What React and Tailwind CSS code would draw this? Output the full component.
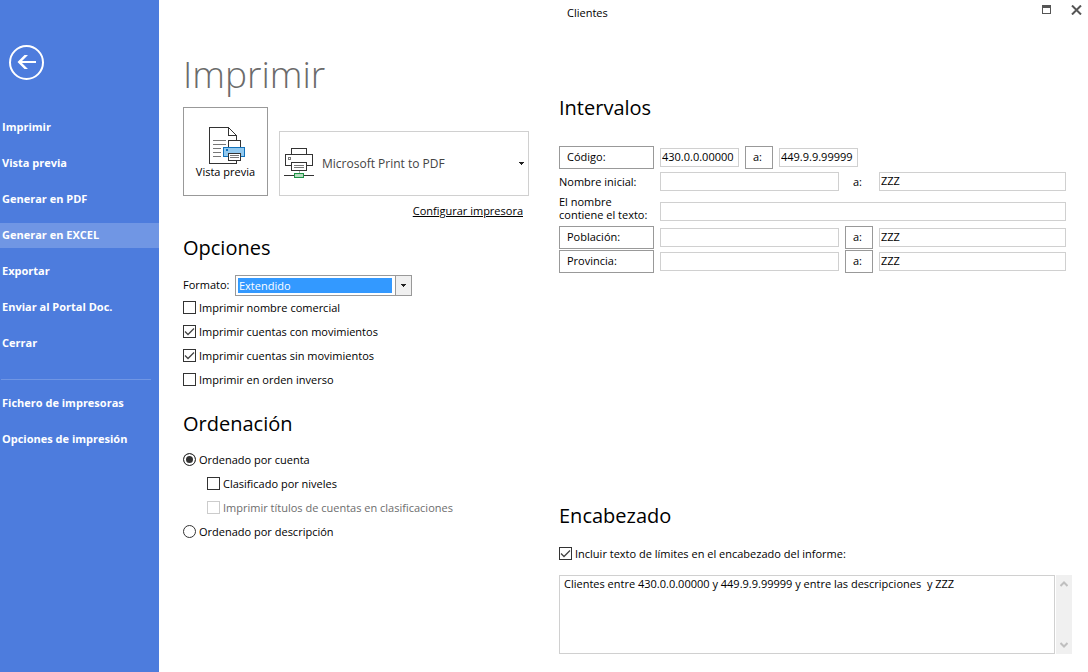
import { useState } from 'react';

const mainActions = [
  'Imprimir', 'Vista previa', 'Generar en PDF', 'Generar en EXCEL',
  'Exportar', 'Enviar al Portal Doc.', 'Cerrar'
];
const setupActions = ['Fichero de impresoras', 'Opciones de impresión'];

function NavItem({ label, active }) {
  return (
    <button type="button"
      className={`h-[25px] w-full pl-[2px] text-left font-bold text-white hover:bg-[#7096e4] ${active ? 'bg-[#7096e4]' : ''}`}>
      {label}
    </button>
  );
}

function Sidebar() {
  return (
    <nav className="w-[159px] shrink-0 bg-[#4d7cdd] pt-[45px]">
      <button type="button" aria-label="Volver" className="ml-[9px] block">
        <svg width="35" height="35" viewBox="0 0 35 35" fill="none" stroke="#fff">
          <circle cx="17.5" cy="17.5" r="16.5" strokeWidth="2" />
          <path d="M11 17h16" strokeWidth="2" />
          <path d="M19 10h-3.500l-7 7l7 7h3.500l-7 -7z" fill="#fff" stroke="none" />
        </svg>
      </button>
      <div className="mt-[35px] flex flex-col gap-[11px]">
        {mainActions.map((label) => (
          <NavItem key={label} label={label} active={label === 'Generar en EXCEL'} />
        ))}
      </div>
      <hr className="mt-[23px] mr-2 mb-[11px] ml-px border-[#7096e4]" />
      <div className="flex flex-col gap-[11px]">
        {setupActions.map((label) => <NavItem key={label} label={label} />)}
      </div>
    </nav>
  );
}

function Check({ label, defaultChecked, disabled }) {
  return (
    <label className={`flex h-6 items-center gap-[3px] ${disabled ? 'text-[#6d6d6d]' : ''}`}>
      <span className="mb-px grid">
        <input type="checkbox" defaultChecked={defaultChecked} disabled={disabled}
          className="peer col-start-1 row-start-1 h-[13px] w-[13px] appearance-none border border-[#333] bg-white disabled:border-[#ccc]" />
        <svg width="13" height="13" viewBox="0 0 13 13" fill="none" stroke="#444" strokeWidth="1.3"
          className="pointer-events-none invisible col-start-1 row-start-1 peer-checked:visible">
          <path d="M2 6.5l3 3 6-6" />
        </svg>
      </span>
      {label}
    </label>
  );
}

function Radio({ label, value, order, setOrder }) {
  return (
    <label className="flex h-6 items-center gap-[3px]">
      <input type="radio" name="orden" value={value} checked={order === value} onChange={() => setOrder(value)}
        className="mb-px h-[13px] w-[13px] appearance-none rounded-full border border-[#333] bg-white checked:bg-[#333] checked:shadow-[inset_0_0_0_2px_#fff]" />
      {label}
    </label>
  );
}

function PreviewIcon() {
  return (
    <svg width="39" height="41" viewBox="0 0 39 41" fill="none" stroke="#333" shapeRendering="crispEdges">
      <path d="M30.5 37v3.5h-27v-36h19" />
      <path d="M22.5 4.5l8 8v5" shapeRendering="auto" />
      <path d="M22.5 4.5v8h8" />
      <path d="M7 17.5h13M7 21.5h13M7 25.5h8M7 29.5h8M7 33.5h8" stroke="#777" />
      <path d="M22.5 24v-6.5h12v6.5" fill="#fff" />
      <path d="M17.5 24.5h21v9h-21z" fill="#92c9ef" stroke="#1272bb" />
      <path d="M20 26h2v2h-2z" fill="#1272bb" stroke="none" />
      <path d="M22.5 30.5h12v7h-12z" fill="#fff" />
      <path d="M24 32.5h9M24 34.5h9" stroke="#777" />
    </svg>
  );
}

function PrinterIcon() {
  return (
    <svg width="30" height="31" viewBox="0 0 30 31" fill="none" stroke="#333" shapeRendering="crispEdges">
      <path d="M7.5 6.5v-6h15v6" />
      <path d="M7 17.5h-5.5v-11h27v11h-5.5" />
      <path d="M4.5 9.5h2v2h-2z" stroke="#777" />
      <path d="M7.5 14.5h15v8h-15z" fill="#fff" />
      <path d="M10 17.5h10M10 19.5h10" stroke="#777" />
      <path d="M15.5 23v3" stroke="#aaa" />
      <path d="M0 27.5h30" />
      <path d="M10.5 25.5h9v4h-9z" fill="#b5dcbf" stroke="#1d9446" />
    </svg>
  );
}

function Arrow() {
  return (
    <svg width="5" height="3" viewBox="0 0 5 3" className="pointer-events-none shrink-0" shapeRendering="crispEdges">
      <path d="M0 0h5v1h-1v1h-1v1h-1v-1h-1v-1h-1z" fill="#222" />
    </svg>
  );
}

function PrintPanel() {
  const [order, setOrder] = useState('cuenta');

  return (
    <section>
      <h1 className="mt-6 text-[37px] leading-[48px] font-light text-[#6b6b6b]">Imprimir</h1>
      <div className="mt-[9px] flex items-end gap-[11px]">
        <button type="button" className="flex h-[89px] w-[85px] flex-col items-center justify-center border border-[#999]">
          <PreviewIcon />
          <span className="leading-4">Vista previa</span>
        </button>
        <div className="flex h-[65px] flex-1 items-center gap-2 border border-[#d0d0d0] pr-1 pl-1">
          <PrinterIcon />
          <select aria-label="Impresora" className="flex-1 appearance-none text-[12px] text-[#444]">
            <option>Microsoft Print to PDF</option>
          </select>
          <Arrow />
        </div>
      </div>
      <div className="mt-[7px] pr-[6px] text-right leading-4">
        <a href="#configurar" className="underline">Configurar impresora</a>
      </div>

      <h2 className="mt-[13px] text-[20px] leading-8">Opciones</h2>
      <div className="mt-[11px] flex items-center">
        <label htmlFor="formato" className="w-[52px]">Formato:</label>
        <div className="flex h-[21px] w-[177px] border border-[#999]">
          <select id="formato" className="m-[2px] mr-[3px] flex-1 appearance-none bg-[#3399ff] pl-px text-[11px] leading-[15px] text-white">
            <option>Extendido</option>
          </select>
          <span className="flex w-4 items-center justify-center border-l border-[#999] bg-[#f0f0f0]">
            <Arrow />
          </span>
        </div>
      </div>
      <Check label="Imprimir nombre comercial" />
      <Check label="Imprimir cuentas con movimientos" defaultChecked />
      <Check label="Imprimir cuentas sin movimientos" defaultChecked />
      <Check label="Imprimir en orden inverso" />

      <h2 className="mt-4 mb-2 text-[20px] leading-8">Ordenación</h2>
      <Radio label="Ordenado por cuenta" value="cuenta" order={order} setOrder={setOrder} />
      <div className="pl-6">
        <Check label="Clasificado por niveles" />
        <Check label="Imprimir títulos de cuentas en clasificaciones" disabled />
      </div>
      <Radio label="Ordenado por descripción" value="descripcion" order={order} setOrder={setOrder} />
    </section>
  );
}

function Field({ id, label, value = '', className }) {
  return (
    <input id={id} type="text" aria-label={label} defaultValue={value}
      className={`h-[19px] min-w-0 border border-[#d0d0d0] px-px pb-[2px] text-[11px] ${className}`} />
  );
}

function BoxButton({ children, className }) {
  return (
    <button type="button" className={`h-[23px] shrink-0 border border-[#999] pl-[7px] text-left ${className}`}>
      {children}
    </button>
  );
}

function Ranges() {
  return (
    <div className="pr-[6px]">
      <h2 className="mt-[66px] mb-[22px] text-[20px] leading-8">Intervalos</h2>
      <div className="mb-px flex items-center gap-[6px]">
        <BoxButton className="w-[95px]">Código:</BoxButton>
        <Field label="Código desde" value="430.0.0.00000" className="w-[79px]" />
        <BoxButton className="w-7">a:</BoxButton>
        <Field label="Código hasta" value="449.9.9.99999" className="w-[79px]" />
      </div>
      <div className="mb-px flex h-[23px] items-center gap-[6px]">
        <label htmlFor="nombre" className="w-[95px] pt-[2px]">Nombre inicial:</label>
        <Field id="nombre" className="w-[179px]" />
        <span className="w-7 pt-[2px] pl-2">a:</span>
        <Field label="Nombre inicial hasta" value="ZZZ" className="flex-1" />
      </div>
      <div className="flex h-8 items-end gap-[6px] pb-[5px]">
        <label htmlFor="contiene" className="w-[95px] leading-[13px]">El nombre<br />contiene el texto:</label>
        <Field id="contiene" className="flex-1" />
      </div>
      {['Población', 'Provincia'].map((name) => (
        <div key={name} className="mb-px flex items-center gap-[6px]">
          <BoxButton className="w-[95px]">{name}:</BoxButton>
          <Field label={`${name} desde`} className="w-[179px]" />
          <BoxButton className="w-7">a:</BoxButton>
          <Field label={`${name} hasta`} value="ZZZ" className="flex-1" />
        </div>
      ))}
    </div>
  );
}

function HeaderText() {
  return (
    <div className="mt-auto pt-8">
      <h2 className="mb-[10px] text-[20px] leading-8">Encabezado</h2>
      <Check label="Incluir texto de límites en el encabezado del informe:" defaultChecked />
      <div className="mt-[9px] flex h-[79px] gap-px">
        <textarea aria-label="Texto del encabezado"
          defaultValue="Clientes entre 430.0.0.00000 y 449.9.9.99999 y entre las descripciones  y ZZZ"
          className="flex-1 resize-none overflow-hidden border border-[#d0d0d0] px-1 text-[11px] leading-4" />
        <div className="flex w-4 flex-col items-center justify-between bg-[#f0f0f0] py-[6px]">
          <svg width="8" height="6" viewBox="0 0 8 6" fill="none" stroke="#bfbfbf" strokeWidth="2"><path d="M.5 5L4 1.5L7.5 5" /></svg>
          <svg width="8" height="6" viewBox="0 0 8 6" fill="none" stroke="#bfbfbf" strokeWidth="2"><path d="M.5 1L4 4.5L7.5 1" /></svg>
        </div>
      </div>
    </div>
  );
}

export default function App() {
  return (
    <div className="flex min-h-screen bg-white font-['Open_Sans','Noto_Sans',sans-serif] text-[11px] text-black">
      <Sidebar />
      <div className="flex flex-1 flex-col">
        <header className="grid h-[26px] grid-cols-[346px_1fr] gap-x-[30px] pr-[6px] pl-6">
          <span className="col-start-2 flex items-center justify-between pl-2">
            Clientes
            <span className="flex items-start gap-[19px] pb-[7px]">
              <button type="button" aria-label="Maximizar">
                <svg width="10" height="10" viewBox="0 0 10 10" shapeRendering="crispEdges" className="block">
                  <path d="M.5 .5h8v8h-8z" fill="none" stroke="#555" />
                  <path d="M0 0h9v3h-9z" fill="#555" />
                </svg>
              </button>
              <button type="button" aria-label="Cerrar ventana">
                <svg width="11" height="10" viewBox="0 0 11 10" stroke="#555" strokeWidth="2" className="block">
                  <path d="M1 .5l9 9M10 .5l-9 9" />
                </svg>
              </button>
            </span>
          </span>
        </header>
        <main className="grid flex-1 grid-cols-[346px_1fr] gap-x-[30px] pr-4 pb-[18px] pl-6">
          <PrintPanel />
          <section className="flex flex-col">
            <Ranges />
            <HeaderText />
          </section>
        </main>
      </div>
    </div>
  );
}
